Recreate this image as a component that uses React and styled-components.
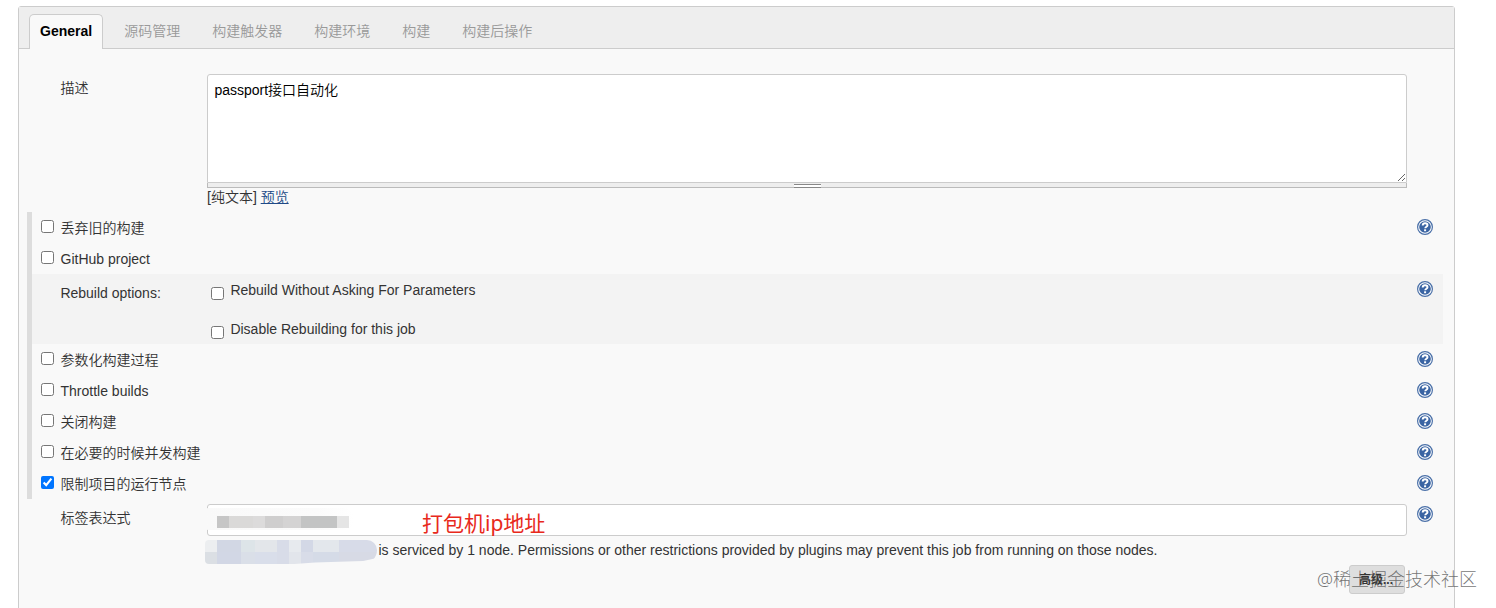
import styled, { createGlobalStyle } from 'styled-components';

const GlobalStyle = createGlobalStyle`
  * {
    box-sizing: border-box;
  }
  body {
    margin: 0;
    background: #fff;
    color: #333;
    font-family: "Liberation Sans", "Noto Sans CJK SC", sans-serif;
    font-size: 14px;
    font-weight: 350;
    line-height: 20px;
    overflow: hidden;
  }
`;

const Page = styled.div`
  position: relative;
  height: 608px;
  padding: 6px 41px 0 18px;
  overflow: hidden;
`;

const Panel = styled.div`
  height: 640px;
  border: 1px solid #ccc;
  border-radius: 3px;
  background: #f9f9f9;
`;

const TabBar = styled.div`
  display: flex;
  height: 42px;
  padding: 7px 0 0 10px;
  border-bottom: 1px solid #ccc;
  background: #eee;
`;

const Tab = styled.div`
  height: ${(p) => (p.$active ? 35 : 34)}px;
  padding: 6px ${(p) => (p.$active ? 10 : 15)}px 0 ${(p) => (p.$active ? 10 : 15)}px;
  margin-right: ${(p) => (p.$active ? 5 : 0)}px;
  border: solid ${(p) => (p.$active ? '#ccc' : 'transparent')};
  border-width: 1px 1px 0;
  border-radius: 5px 5px 0 0;
  background: ${(p) => (p.$active ? '#f9f9f9' : 'transparent')};
  color: ${(p) => (p.$active ? '#000' : '#999')};
  font-weight: ${(p) => (p.$active ? 'bold' : 'inherit')};
  white-space: nowrap;
`;

const Field = styled.div`
  display: grid;
  grid-template-columns: 147px 1200px 16px;
  column-gap: 0;
  padding-left: 41px;
  padding-top: ${(p) => p.$top}px;
`;

const Label = styled.div`
  padding: ${(p) => p.$top || 0}px 0 0 0.4px;
`;

const Description = styled.textarea`
  display: block;
  width: 100%;
  height: 109px;
  margin: 0;
  padding: 5px 6.4px;
  border: 1px solid #ccc;
  border-radius: 3px 3px 0 0;
  outline: none;
  background: #fff;
  color: #000;
  font: inherit;
  resize: vertical;
`;

const Handle = styled.div`
  display: flex;
  justify-content: center;
  height: 5px;
  border: solid #bbb;
  border-width: 0 1px 1px;
  background: #eee;
`;

const Grip = styled.div`
  width: 27px;
  height: 4px;
  margin-left: 1px;
  margin-top: 1px;
  border: solid #888;
  border-width: 1px 0;
  background: #fff;
`;

const Markup = styled.div`
  height: 19px;
  line-height: 18px;
`;

const Preview = styled.a`
  color: #204a87;
  text-decoration: underline;
`;

const Options = styled.div`
  width: 1416px;
  margin: 5px 0 0 8px;
  border-left: 5px solid #ddd;
`;

const Row = styled.div`
  display: flex;
  height: 31px;
  padding: 6px 10px 0 9px;
`;

const OptionLabel = styled.label`
  display: flex;
  flex: 1;
  gap: 6.5px;
`;

const Check = styled.input`
  width: 13px;
  height: 13px;
  margin: ${(p) => p.$top}px 0 0;
  flex: none;
`;

const Rebuild = styled.div`
  display: flex;
  height: 70px;
  padding: 6px 10px 0 28.4px;
  background: #f3f3f3;
`;

const RebuildTitle = styled.div`
  width: 150.6px;
  padding-top: 3px;
`;

const RebuildChoices = styled.div`
  display: flex;
  flex: 1;
  flex-direction: column;
  gap: 19px;
`;

const Choice = styled.label`
  display: flex;
  height: 20px;
  gap: 6.4px;
`;

const HelpIcon = styled.svg`
  display: block;
  flex: none;
  width: 16px;
  height: 16px;
  margin: ${(p) => p.$margin || '1px 0 0'};
`;

const NodeInput = styled.div`
  display: flex;
  align-items: center;
  position: relative;
  height: 32px;
  padding: 4px 0 0 9px;
  border: 1px solid #ccc;
  border-radius: 3px;
  background: #fff;
`;

const Smudge = styled.div`
  position: absolute;
  left: -2px;
  top: 3px;
  width: 148px;
  height: 22px;
  border-radius: 2px 10px 10px 2px;
  background: linear-gradient(90deg, #f9f9f9, #fbfbfb 75%, #fff);
`;

const Mosaic = styled.div`
  display: flex;
  position: relative;
  height: 12px;
`;

const Tile = styled.span`
  width: ${(p) => p.$w}px;
  background: ${(p) => (p.$low ? `linear-gradient(${p.$c} 50%, ${p.$low} 50%)` : p.$c)};
`;

const Note = styled.span`
  position: absolute;
  left: 214px;
  top: 3px;
  color: #e8291c;
  font-family: "Noto Sans", "Noto Sans CJK SC", sans-serif;
  font-size: 21px;
  font-weight: 400;
  line-height: 30px;
`;

const NodeInfo = styled.div`
  display: flex;
  height: 29px;
  margin-left: -2px;
  padding-top: 4px;
  white-space: nowrap;
`;

const HiddenName = styled.div`
  display: flex;
  width: 172px;
  height: 24px;
  margin-right: 1.5px;
  border-radius: 4px 10px 14px 4px;
  clip-path: polygon(0 0, 100% 0, 100% 75%, 92% 88%, 64% 94%, 52% 100%, 0 100%);
  overflow: hidden;
`;

const Actions = styled.div`
  display: flex;
  justify-content: flex-end;
  padding-right: 49px;
`;

const Advanced = styled.button`
  width: 56px;
  height: 29px;
  padding: 0 2px 3px 0;
  border: 1px solid #ccc;
  border-radius: 3px;
  background: #dedede;
  color: #333;
  font: bold 12px "Liberation Sans", "Noto Sans CJK SC", sans-serif;
`;

const Watermark = styled.div`
  position: absolute;
  left: 1317px;
  top: 566px;
  color: rgba(80, 80, 80, 0.78);
  font-family: "Noto Sans", "Noto Sans CJK SC", sans-serif;
  font-size: 18px;
  font-weight: 300;
  line-height: 26px;
  white-space: nowrap;
`;

const tabs = ['General', '源码管理', '构建触发器', '构建环境', '构建', '构建后操作'];

const before = [
  { text: '丢弃旧的构建', help: true },
  { text: 'GitHub project' },
];

const after = [
  { text: '参数化构建过程', help: true },
  { text: 'Throttle builds', help: true },
  { text: '关闭构建', help: true },
  { text: '在必要的时候并发构建', help: true },
  { text: '限制项目的运行节点', help: true, checked: true },
];

const inputTiles = [
  [12, '#c6c6c6'],
  [24, '#dad9d8'],
  [12, '#dcdbdb'],
  [18, '#cfcece'],
  [18, '#d4d3d3'],
  [36, '#c3c4c4'],
  [12, '#e5e5e5'],
];

// width, upper colour, lower colour
const nameTiles = [
  [12, '#eceef0', '#dbdfe4'],
  [24, '#d2d7e4', '#d2d7e5'],
  [14, '#dde4e8', '#dadfe8'],
  [22, '#e3e6ea', '#d9deea'],
  [12, '#d8dce8', '#d8dce8'],
  [12, '#e7eaee', '#e2e5eb'],
  [12, '#d3d8e6', '#d8dce8'],
  [26, '#e3e7ec', '#d5dbe7'],
  [38, '#d7dbe8', '#d7dae5'],
];

const Help = ({ margin }) => (
  <HelpIcon $margin={margin} viewBox="0 0 16 16">
    <circle cx="8" cy="8" r="7.4" fill="#fff" stroke="#4a70a8" strokeWidth="1.2" />
    <circle cx="8" cy="8" r="5.8" fill="#3a64a3" />
    <path
      d="M5.7 6.5C5.7 5 6.6 4.3 8.1 4.3s2.4.7 2.4 1.9c0 1.5-2.3 1.5-2.3 3.1"
      fill="none"
      stroke="#fff"
      strokeWidth="1.9"
    />
    <rect x="7.1" y="10.3" width="2" height="1.9" fill="#fff" />
  </HelpIcon>
);

const Option = ({ text, help, checked }) => (
  <Row>
    <OptionLabel>
      <Check type="checkbox" defaultChecked={checked} $top={2} />
      <span>{text}</span>
    </OptionLabel>
    {help && <Help />}
  </Row>
);

const App = () => {
  return (
    <Page>
      <GlobalStyle />
      <Panel>
        <TabBar>
          {tabs.map((name, i) => (
            <Tab key={name} $active={i === 0}>
              {name}
            </Tab>
          ))}
        </TabBar>
        <Field $top={25}>
          <Label $top={4}>描述</Label>
          <div>
            <Description defaultValue="passport接口自动化" spellCheck={false} />
            <Handle>
              <Grip />
            </Handle>
            <Markup>
              [纯文本] <Preview>预览</Preview>
            </Markup>
          </div>
        </Field>
        <Options>
          {before.map((o) => (
            <Option key={o.text} {...o} />
          ))}
          <Rebuild>
            <RebuildTitle>Rebuild options:</RebuildTitle>
            <RebuildChoices>
              <Choice>
                <Check type="checkbox" $top={7} />
                <span>Rebuild Without Asking For Parameters</span>
              </Choice>
              <Choice>
                <Check type="checkbox" $top={7} />
                <span>Disable Rebuilding for this job</span>
              </Choice>
            </RebuildChoices>
            <Help />
          </Rebuild>
          {after.map((o) => (
            <Option key={o.text} {...o} />
          ))}
        </Options>
        <Field $top={5}>
          <Label $top={4}>标签表达式</Label>
          <div>
            <NodeInput>
              <Smudge />
              <Mosaic>
                {inputTiles.map(([w, c], i) => (
                  <Tile key={i} $w={w} $c={c} />
                ))}
              </Mosaic>
              <Note>打包机ip地址</Note>
            </NodeInput>
            <NodeInfo>
              <HiddenName>
                {nameTiles.map(([w, c, low], i) => (
                  <Tile key={i} $w={w} $c={c} $low={low} />
                ))}
              </HiddenName>
              is serviced by 1 node. Permissions or other restrictions provided by plugins may
              prevent this job from running on those nodes.
            </NodeInfo>
          </div>
          <Help margin="2px 0 0 10px" />
        </Field>
        <Actions>
          <Advanced>高级...</Advanced>
        </Actions>
      </Panel>
      <Watermark>@稀土掘金技术社区</Watermark>
    </Page>
  );
};

export default App;
